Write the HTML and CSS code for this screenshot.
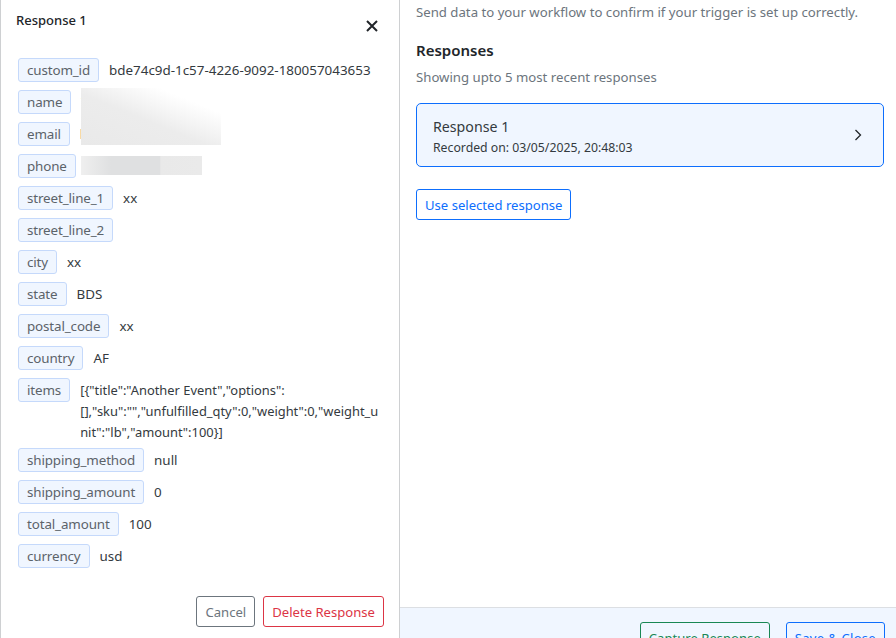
FILE: index.html
```html
<!DOCTYPE html>
<html lang="en">
<head>
<meta charset="utf-8">
<title>Response 1</title>
<link rel="stylesheet" href="styles.css">
</head>
<body>
<div class="app">
  <aside class="drawer">
    <header class="drawer-head">
      <h2 class="drawer-title">Response 1</h2>
      <button class="close" aria-label="Close">
        <svg width="12" height="12" viewBox="0 0 12 12"><path d="M1 1L11 11M11 1L1 11" stroke="#212529" stroke-width="2" fill="none"/></svg>
      </button>
    </header>
    <div class="fields">
      <div class="row"><span class="chip">custom_id</span><span class="val">bde74c9d-1c57-4226-9092-180057043653</span></div>
      <div class="row"><span class="chip">name</span><span class="val">T</span></div>
      <div class="row"><span class="chip">email</span><span class="val">l</span></div>
      <div class="row"><span class="chip">phone</span><span class="val"></span></div>
      <div class="row"><span class="chip">street_line_1</span><span class="val">xx</span></div>
      <div class="row"><span class="chip">street_line_2</span><span class="val"></span></div>
      <div class="row"><span class="chip">city</span><span class="val">xx</span></div>
      <div class="row"><span class="chip">state</span><span class="val">BDS</span></div>
      <div class="row"><span class="chip">postal_code</span><span class="val">xx</span></div>
      <div class="row"><span class="chip">country</span><span class="val">AF</span></div>
      <div class="row"><span class="chip">items</span><span class="val wrap">[{"title":"Another Event","options":<br>[],"sku":"","unfulfilled_qty":0,"weight":0,"weight_u<br>nit":"lb","amount":100}]</span></div>
      <div class="row"><span class="chip">shipping_method</span><span class="val">null</span></div>
      <div class="row"><span class="chip">shipping_amount</span><span class="val">0</span></div>
      <div class="row"><span class="chip">total_amount</span><span class="val">100</span></div>
      <div class="row"><span class="chip">currency</span><span class="val">usd</span></div>
    </div>
    <div class="drawer-actions">
      <button class="btn btn-grey">Cancel</button>
      <button class="btn btn-red">Delete Response</button>
    </div>
    <div class="blur blur-a"></div>
    <div class="blur blur-b"></div>
  </aside>
  <main class="panel">
    <div class="panel-body">
      <p class="lead">Send data to your workflow to confirm if your trigger is set up correctly.</p>
      <h3 class="heading">Responses</h3>
      <p class="sub">Showing upto 5 most recent responses</p>
      <div class="card">
        <div class="card-text">
          <div class="card-title">Response 1</div>
          <div class="card-meta">Recorded on: 03/05/2025, 20:48:03</div>
        </div>
        <svg width="8" height="12" viewBox="0 0 8 12"><path d="M1.5 1L6.5 6L1.5 11" stroke="#212529" stroke-width="1.3" fill="none"/></svg>
      </div>
      <button class="btn btn-blue">Use selected response</button>
    </div>
    <footer class="panel-foot">
      <button class="btn btn-green">Capture Response</button>
      <button class="btn btn-blue btn-save">Save &amp; Close</button>
    </footer>
  </main>
</div>
</body>
</html>
```
FILE: styles.css
```css
* { box-sizing: border-box; }
html, body { margin: 0; padding: 0; }
body {
  font-family: "Noto Sans", "Open Sans", "Liberation Sans", sans-serif;
  font-size: 13.4px;
  color: #212529;
  background: #fff;
}
button { font-family: inherit; }
.app {
  display: flex;
  width: 896px;
  height: 638px;
  overflow: hidden;
}
.drawer {
  position: relative;
  flex: 0 0 400px;
  width: 400px;
  min-width: 0;
  height: 638px;
  border-left: 1px solid #ced0d2;
  border-right: 1px solid #ced0d2;
  padding: 0 15px 0 17px;
  display: flex;
  flex-direction: column;
}
.drawer-head {
  display: flex;
  justify-content: space-between;
  align-items: flex-start;
  height: 58px;
  padding-top: 10px;
  margin-left: -2px;
}
.drawer-title {
  margin: 0;
  font-size: 13px;
  line-height: 20px;
  font-weight: 500;
}
.close {
  border: 0;
  background: none;
  padding: 0;
  margin: 10px 6px 0 0;
  width: 12px;
  height: 12px;
  display: flex;
}
.fields {
  display: flex;
  flex-direction: column;
  gap: 8px;
}
.row {
  display: flex;
  align-items: flex-start;
  gap: 10px;
}
.chip {
  flex: none;
  height: 24px;
  line-height: 22px;
  padding: 0 8px;
  background: #f0f6ff;
  border: 1px solid #c5d9fb;
  border-radius: 3px;
  color: #5c636a;
  letter-spacing: -0.13px;
}
.val {
  line-height: 24px;
  color: #343a40;
  white-space: nowrap;
}
.wrap {
  height: 62px;
  padding-top: 2px;
  line-height: 21px;
  font-size: 12.9px;
}
.drawer-actions {
  margin-top: auto;
  margin-bottom: 11px;
  display: flex;
  justify-content: flex-end;
  gap: 8px;
}
.btn {
  height: 31px;
  padding: 0 8px;
  font-size: 13.1px;
  border-radius: 3px;
  background: #fff;
  border: 1px solid;
}
.btn-grey { border-color: #6c757d; color: #6c757d; }
.btn-red { border-color: #dc3545; color: #dc3545; }
.btn-blue { border-color: #0d6efd; color: #0d6efd; }
.btn-green { border-color: #198754; color: #198754; background: transparent; }
.panel-foot .btn-blue { background: transparent; }
.btn-save { letter-spacing: 0.25px; }
.blur { position: absolute; }
.blur-a {
  left: 80px;
  top: 88px;
  width: 140px;
  height: 57px;
  background: linear-gradient(to top right, #e9e9e9 0%, #ececec 45%, #ffffff 78%);
}
.blur-b {
  left: 80px;
  top: 156px;
  width: 121px;
  height: 19px;
  background: linear-gradient(to right, #efefef 0%, #dfe0e1 25%, #dfe0e1 65%, #e9e9e9 66%, #eaeaea 100%);
}
.panel {
  flex: 0 0 496px;
  width: 496px;
  height: 638px;
  display: flex;
  flex-direction: column;
}
.panel-body {
  flex: 1;
  padding: 0 12px 0 16px;
  display: flex;
  flex-direction: column;
  align-items: flex-start;
}
.lead {
  margin: 2px 0 0;
  line-height: 20px;
  font-size: 13.2px;
  color: #6c757d;
  white-space: nowrap;
}
.heading {
  margin: 17px 0 0;
  font-size: 15px;
  line-height: 22px;
  font-weight: 600;
  color: #212529;
}
.sub {
  margin: 6px 0 0;
  line-height: 20px;
  font-size: 13.2px;
  color: #6c757d;
}
.card {
  margin-top: 16px;
  width: 468px;
  height: 64px;
  background: #f0f6ff;
  border: 1px solid #0d6efd;
  border-radius: 5px;
  padding: 0 21px 0 16px;
  display: flex;
  justify-content: space-between;
  align-items: center;
}
.card-text { padding-top: 2px; }
.card-title { font-size: 14.2px; line-height: 23px; color: #343a40; }
.card-meta { font-size: 12.25px; line-height: 20px; color: #343a40; }
.panel-body .btn-blue { margin-top: 22px; }
.panel-foot {
  flex: 0 0 31px;
  height: 31px;
  background: #f0f6ff;
  border-top: 1px solid #dcdfe3;
  padding: 14px 11px 0 0;
  display: flex;
  justify-content: flex-end;
  gap: 16px;
}
.panel-foot .btn { flex: none; }
```
